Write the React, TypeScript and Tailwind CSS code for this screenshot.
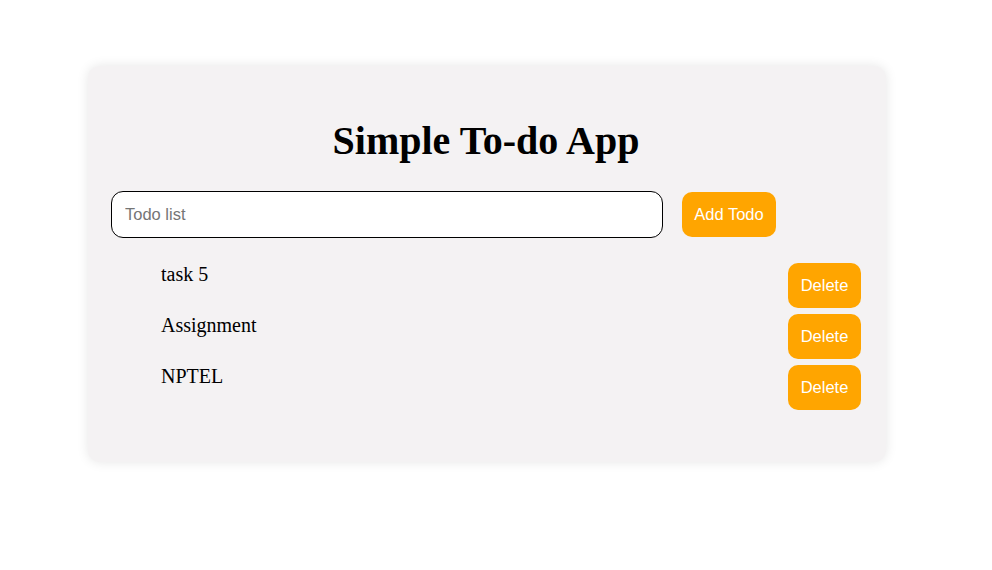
import { useState } from "react";

type Todo = { id: number; text: string };

const initialTodos: Todo[] = [
  { id: 1, text: "task 5" },
  { id: 2, text: "Assignment" },
  { id: 3, text: "NPTEL" },
];

export default function App() {
  const [todos, setTodos] = useState<Todo[]>(initialTodos);
  const [value, setValue] = useState("");

  const addTodo = () => {
    if (!value.trim()) return;
    setTodos([{ id: Date.now(), text: value }, ...todos]);
    setValue("");
  };

  return (
    <div className="min-h-[570px] bg-white pt-[66px] font-['Liberation_Serif',serif]">
      <div className="ml-[88px] w-[798px] rounded-xl bg-[#f4f2f3] pb-[52px] pl-[23px] pr-[25px] pt-[52px] shadow-[0_0_12px_rgba(0,0,0,0.1)]">
        <h1 className="text-center text-[40px] font-bold leading-[46px] text-black">
          Simple To-do App
        </h1>
        <div className="mt-[27px] flex items-center gap-[19px]">
          <input
            value={value}
            onChange={(e) => setValue(e.target.value)}
            placeholder="Todo list"
            className="h-[47px] w-[552px] rounded-xl border border-black bg-white px-[13px] font-['Liberation_Sans',sans-serif] text-[16.5px] text-black outline-none placeholder:text-[#757575]"
          />
          <button
            onClick={addTodo}
            className="h-[45px] w-[94px] rounded-[10px] bg-[#ffa500] font-['Liberation_Sans',sans-serif] text-[16.5px] text-white"
          >
            Add Todo
          </button>
        </div>
        <ul className="mt-[25px] flex flex-col gap-[6px] pl-[50px]">
          {todos.map((todo) => (
            <li key={todo.id} className="flex items-start justify-between">
              <span className="text-[20px] leading-[23px] text-black">{todo.text}</span>
              <button
                onClick={() => setTodos(todos.filter((t) => t.id !== todo.id))}
                className="h-[45px] w-[73px] rounded-[10px] bg-[#ffa500] font-['Liberation_Sans',sans-serif] text-[16.5px] text-white"
              >
                Delete
              </button>
            </li>
          ))}
        </ul>
      </div>
    </div>
  );
}
